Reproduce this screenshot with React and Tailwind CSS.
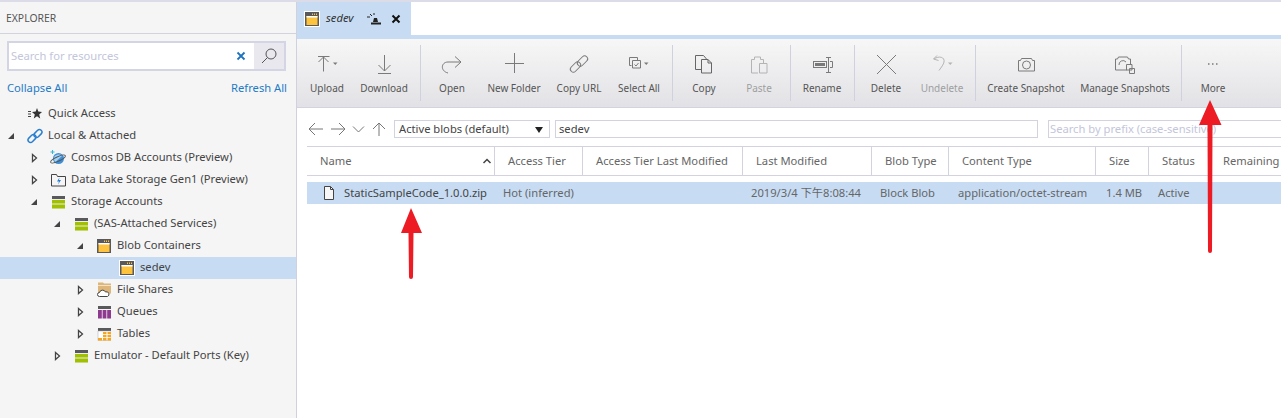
const ink = '#7a7a7a'

function Caret({ open }) {
  if (open) {
    return (
      <svg width="12" height="12" viewBox="0 0 12 12"><path d="M9 3v6H3z" fill="#444" /></svg>
    )
  }
  return (
    <svg width="12" height="12" viewBox="0 0 12 12"><path d="M4.500 2.500 8.500 6l-4 3.500z" fill="#fff" stroke="#444" strokeWidth="1.300" /></svg>
  )
}

function StorageIcon() {
  return (
    <svg width="14" height="14" viewBox="0 0 14 14">
      <rect x="1" y="1" width="13" height="12.500" fill="#eee" />
      <rect x="1" y="1" width="13" height="3" fill="#59595b" />
      <rect x="1" y="5" width="13" height="3.500" fill="#a0c000" />
      <rect x="1" y="9.500" width="13" height="4" fill="#a0c000" />
    </svg>
  )
}

function BlobIcon({ framed }) {
  return (
    <svg width="16" height="16" viewBox="0 0 16 16">
      {framed && <rect x="0" y="0" width="16" height="16" fill="#fff" />}
      <rect x="1" y="1" width="14" height="14" fill="#59595b" />
      <rect x="2.500" y="5" width="11" height="9" fill="#fdc33f" />
      <rect x="2.500" y="5" width="11" height="1.500" fill="#fff" />
      <rect x="8" y="2.500" width="1" height="1.500" fill="#fdc33f" />
      <rect x="10" y="2.500" width="1" height="1.500" fill="#fdc33f" />
      <rect x="12" y="2.500" width="1" height="1.500" fill="#fdc33f" />
    </svg>
  )
}

function QuickIcon() {
  return (
    <svg width="16" height="14" viewBox="0 0 16 14">
      <path d="M1 4.500h3M1 7h3M1 9.500h3" stroke="#444" />
      <path d="M10 1l1.300 3.600 3.700.4-2.800 2.400 1 4-3.200-2.200L6.800 11.500l1-4L5 5l3.700-.4z" fill="#333" />
    </svg>
  )
}

function LinkIcon() {
  return (
    <svg width="16" height="16" viewBox="0 0 16 16" fill="none" stroke="#2a7fd0" strokeWidth="1.500">
      <rect x="0.500" y="8" width="9" height="5" rx="2.500" transform="rotate(-45 5 10.500)" />
      <rect x="6.500" y="3" width="9" height="5" rx="2.500" transform="rotate(-45 11 5.500)" />
    </svg>
  )
}

function CosmosIcon() {
  return (
    <svg width="16" height="16" viewBox="0 0 16 16">
      <circle cx="8.500" cy="8.500" r="5.500" fill="#3f8fd8" />
      <path d="M4.500 6.500c2-2.500 6-2.500 8-1l-7 6.500c-1.500-1.500-2-3.500-1-5.500z" fill="#a4d2f2" />
      <ellipse cx="8" cy="9" rx="8" ry="2.200" fill="none" stroke="#555" transform="rotate(-25 8 9)" />
      <path d="M2.500 0v4M.500 2h4" stroke="#35b8d8" />
    </svg>
  )
}

function LakeIcon() {
  return (
    <svg width="15" height="14" viewBox="0 0 15 14" fill="none">
      <path d="M.500 13V1.500h5l1 2h8V13z" stroke="#444" />
      <path d="M8.500 4.500 6 8.500h2l-1 3 3-4.500H8z" fill="#2a7fd0" />
    </svg>
  )
}

function ShareIcon() {
  return (
    <svg width="15" height="15" viewBox="0 0 15 15">
      <path d="M1 .5h5l1 1h7v10H1z" fill="#dcb67a" />
      <path d="M1 3.500h13" stroke="#f3e2c4" />
      <path d="M2.500 14.500a2 2 0 0 1 0-4 3.200 3.200 0 0 1 6-.5 2.300 2.300 0 0 1 2 4.500z" fill="#fff" stroke="#444" />
    </svg>
  )
}

function QueueIcon() {
  return (
    <svg width="14" height="14" viewBox="0 0 14 14">
      <rect x="1" y="1" width="13" height="3" fill="#59595b" />
      <rect x="1" y="5" width="3.800" height="8.500" fill="#8e3a8f" />
      <rect x="5.600" y="5" width="3.800" height="8.500" fill="#8e3a8f" />
      <rect x="10.200" y="5" width="3.800" height="8.500" fill="#8e3a8f" />
    </svg>
  )
}

function TableIcon() {
  return (
    <svg width="14" height="14" viewBox="0 0 14 14">
      <rect x="1" y="1" width="13" height="3" fill="#59595b" />
      <rect x="1" y="4" width="13" height="9.500" fill="#fff" stroke="#aaa" strokeWidth="0.500" />
      <path d="M6 5h3.500v2.300H6zM10.500 5H14v2.300h-3.500zM6 8h3.500v2.300H6zM10.500 8H14v2.300h-3.500zM1 11h4v2.500H1zM6 11h3.500v2.500H6zM10.500 11H14v2.500h-3.500z" fill="#f5a623" />
    </svg>
  )
}

const tree = [
  { label: 'Quick Access', indent: 'pl-[5px]', icon: <QuickIcon /> },
  { label: 'Local & Attached', indent: 'pl-[5px]', open: true, caret: true, icon: <LinkIcon /> },
  { label: 'Cosmos DB Accounts (Preview)', indent: 'pl-[28px]', caret: true, icon: <CosmosIcon /> },
  { label: 'Data Lake Storage Gen1 (Preview)', indent: 'pl-[28px]', caret: true, icon: <LakeIcon /> },
  { label: 'Storage Accounts', indent: 'pl-[28px]', open: true, caret: true, icon: <StorageIcon /> },
  { label: '(SAS-Attached Services)', indent: 'pl-[51px]', open: true, caret: true, icon: <StorageIcon /> },
  { label: 'Blob Containers', indent: 'pl-[74px]', open: true, caret: true, icon: <BlobIcon /> },
  { label: 'sedev', indent: 'pl-[97px]', selected: true, icon: <BlobIcon framed /> },
  { label: 'File Shares', indent: 'pl-[74px]', caret: true, icon: <ShareIcon /> },
  { label: 'Queues', indent: 'pl-[74px]', caret: true, icon: <QueueIcon /> },
  { label: 'Tables', indent: 'pl-[74px]', caret: true, icon: <TableIcon /> },
  { label: 'Emulator - Default Ports (Key)', indent: 'pl-[51px]', caret: true, icon: <StorageIcon /> },
]

function Sidebar() {
  return (
    <aside className="w-[297px] shrink-0 border-r border-[#cfd0e0] bg-[#f5f5f5] flex flex-col">
      <div className="h-[32px] border-b border-[#d3d3e0] pl-[6px] pt-[2px] flex items-center text-[10.4px] text-[#555]">EXPLORER</div>
      <div className="mx-[7px] mt-[7px] h-[30px] w-[279px] border-2 border-[#d4d5e4] bg-white flex">
        <div className="flex-1 flex items-center pl-[2px] pt-[1px] text-[#c3c6da]">Search for resources</div>
        <div className="w-[26px] flex items-center justify-center">
          <svg width="10" height="10" viewBox="0 0 10 10"><path d="M1.500 1.500l7 7M8.500 1.500l-7 7" stroke="#1f72bd" strokeWidth="1.800" /></svg>
        </div>
        <div className="w-[30px] bg-[#e8e8ee] flex items-center justify-center">
          <svg width="18" height="18" viewBox="0 0 18 18" fill="none" stroke="#555"><circle cx="11" cy="7" r="5" /><path d="M7.500 10.500 2 16" /></svg>
        </div>
      </div>
      <div className="mx-[7px] mt-[9px] w-[280px] flex justify-between text-[#1f7bc6]">
        <span>Collapse All</span>
        <span>Refresh All</span>
      </div>
      <div className="mt-[6px]">
        {tree.map(row => (
          <div
            key={row.label}
            className={`h-[22px] flex items-center ${row.indent} ${row.selected ? 'bg-[#c7dcf3]' : ''}`}
          >
            <span className="w-[12px] h-[12px] shrink-0 flex">{row.caret && <Caret open={row.open} />}</span>
            <span className="w-[16px] ml-[10px] shrink-0 flex items-center justify-center">{row.icon}</span>
            <span className="ml-[5px] text-[#444] whitespace-nowrap">{row.label}</span>
          </div>
        ))}
      </div>
    </aside>
  )
}

function Icon({ children, w = 32 }) {
  return (
    <svg width={w} height="28" viewBox={`0 0 ${w} 28`} fill="none" stroke={ink}>{children}</svg>
  )
}

const smallCaret = <path d="M22 12.500h4.500L24.250 15z" fill={ink} stroke="none" />

const toolbar = [
  { label: 'Upload', width: 'w-[54px]', icon: <Icon><path d="M7 6.500h11.500M12.500 7v14.500M7.500 12l5-5 5 5" />{smallCaret}</Icon> },
  { label: 'Download', width: 'w-[60px]', icon: <Icon><path d="M16.500 5v16M10.500 15l6 6 6-6M10 23.500h13" /></Icon> },
  { sep: 'ml-[6px]' },
  { label: 'Open', width: 'w-[62px]', icon: <Icon><path d="M25 12H12C5 12 4 21 12 23M19 6.500l6 5.500-6 5.500" /></Icon> },
  { label: 'New Folder', width: 'w-[62px]', icon: <Icon><path d="M16.500 3v20M7 13.500h19" /></Icon> },
  { label: 'Copy URL', width: 'w-[68px]', icon: (
    <Icon>
      <rect x="6.500" y="14" width="12" height="6" rx="3" transform="rotate(-45 12.500 17)" />
      <rect x="13.500" y="8" width="12" height="6" rx="3" transform="rotate(-45 19.500 11)" />
    </Icon>
  ) },
  { label: 'Select All', width: 'w-[52px]', icon: <Icon w={34}><path d="M9.500 15.500h-2v-8h8v2.500M10.500 10.500h8v7.500h-8zM12.500 14.500l1.500 1.500 2.500-3" />{smallCaret}</Icon> },
  { sep: 'ml-[7px]' },
  { label: 'Copy', width: 'w-[62px]', icon: <Icon><path d="M13 19.500H7.500v-14h8l3 3.500v.5M13.500 9.500h6.500l3.500 3.500v10h-10zM20 9.500V13h3.500" stroke="#666" /></Icon> },
  { label: 'Paste', width: 'w-[48px]', disabled: true, icon: <Icon><path d="M15 23H8.500V9.500h3V7h6v2.500h3V13M16.500 13.500h7.500v9.500h-7.500z" /></Icon> },
  { sep: 'ml-[7px]' },
  { label: 'Rename', width: 'w-[62px]', icon: <Icon><rect x="7.500" y="11.500" width="13" height="6" /><rect x="9" y="13" width="10" height="3" fill={ink} stroke="none" /><path d="M20 7.500h5M20 22.500h5M22.500 8v14M24 11.500h2.500v6H24" /></Icon> },
  { sep: 'ml-[1px]' },
  { label: 'Delete', width: 'w-[62px]', icon: <Icon><path d="M7 5l19 19M26 5 7 24" /></Icon> },
  { label: 'Undelete', width: 'w-[50px]', disabled: true, icon: <Icon><path d="M11 5.500 7.500 9l5 1.500M8 9c5-3.500 11-2 10 3-.5 2.500-2.500 5-5 8.500" />{smallCaret}</Icon> },
  { sep: 'ml-[8px]' },
  { label: 'Create Snapshot', width: 'w-[100px]', icon: <Icon><path d="M8.500 10.500h2l1-2h10l1 2h2v10.500h-16z" /><circle cx="16.500" cy="15" r="4" /></Icon> },
  { label: 'Manage Snapshots', width: 'w-[98px]', icon: <Icon><path d="M18 20H6.500V9h2l1-2h9l1 2h2v7" /><path d="M10 15a4 4 0 0 1 7-3" /><path d="M17.500 14.500h5.500v5.500h-5.500zM20.500 18.500h5v5h-5z" fill="#eee" /></Icon> },
  { sep: 'ml-[7px]' },
  { label: 'More', width: 'w-[62px]', icon: <Icon><path d="M11 14h1.500M15 14h1.500M19 14h1.500" strokeWidth="1.500" /></Icon> },
]

function Toolbar() {
  return (
    <div className="h-[69px] pl-[3px] flex items-center border-b border-[#d3d3e0] bg-gradient-to-b from-[#f7f7f7] to-[#e2e2e6]">
      {toolbar.map((item, i) => item.sep ? (
        <div key={i} className={`${item.sep} w-px h-[56px] bg-[#d0d1e0]`} />
      ) : (
        <div key={item.label} className={`${item.width} h-full flex flex-col items-center shrink-0 whitespace-nowrap ${item.disabled ? 'opacity-50' : ''}`}>
          <div className="mt-[11px] h-[28px] flex items-center justify-center">{item.icon}</div>
          <span className="mt-[2px] text-[#555] text-[10px] leading-[16px]">{item.label}</span>
        </div>
      ))}
    </div>
  )
}

const columns = [
  { label: 'Name', width: 'w-[188px]', sort: true },
  { label: 'Access Tier', width: 'w-[88px]' },
  { label: 'Access Tier Last Modified', width: 'w-[160px]' },
  { label: 'Last Modified', width: 'w-[129px]' },
  { label: 'Blob Type', width: 'w-[77px]' },
  { label: 'Content Type', width: 'w-[147px]' },
  { label: 'Size', width: 'w-[53px]' },
  { label: 'Status', width: 'w-[61px]' },
  { label: 'Remaining', width: 'w-[71px]' },
]

const cells = [
  { text: 'StaticSampleCode_1.0.0.zip', width: 'w-[188px]', file: true },
  { text: 'Hot (inferred)', width: 'w-[88px]', pad: 'pl-[8px]' },
  { text: '', width: 'w-[160px]' },
  { text: '2019/3/4 下午8:08:44', width: 'w-[129px]', pad: 'pl-[8px]' },
  { text: 'Block Blob', width: 'w-[77px]', pad: 'pl-[8px]' },
  { text: 'application/octet-stream', width: 'w-[147px]', pad: 'pl-[9px]' },
  { text: '1.4 MB', width: 'w-[53px]', pad: 'pl-[10px]' },
  { text: 'Active', width: 'w-[61px]', pad: 'pl-[9px]' },
]

function BlobTable() {
  return (
    <div className="ml-[10px]">
      <div className="h-[30px] flex border-y border-[#d3d3e0] text-[#666] whitespace-nowrap">
        {columns.map((col, i) => (
          <div key={col.label} className={`${col.width} shrink-0 flex items-center pl-[13px] ${i < 8 ? 'border-r border-[#d3d3e0]' : ''}`}>
            <span className="flex-1">{col.label}</span>
            {col.sort && (
              <svg className="mr-[2px]" width="10" height="8" viewBox="0 0 10 8" fill="none"><path d="M1.500 6 5 2.500 8.500 6" stroke="#444" strokeWidth="1.500" /></svg>
            )}
          </div>
        ))}
      </div>
      <div className="mt-[6px] h-[22px] flex items-center bg-[#c7dcf3] whitespace-nowrap text-[#666]">
        {cells.map((cell, i) => (
          <div key={i} className={`${cell.width} shrink-0 flex items-center ${cell.pad || ''}`}>
            {cell.file ? (
              <>
                <svg className="ml-[16px] mr-[9px]" width="12" height="14" viewBox="0 0 12 14"><path d="M1.500.5h6l3 3v10h-9z" fill="#f7f7f7" stroke="#444" /><path d="M7.500.5v3h3" fill="none" stroke="#444" /></svg>
                <span className="text-[#444]">{cell.text}</span>
              </>
            ) : cell.text}
          </div>
        ))}
      </div>
    </div>
  )
}

function NavRow() {
  return (
    <div className="h-[34px] ml-[10px] flex items-center">
      <svg width="84" height="16" viewBox="0 0 84 16" fill="none" stroke="#777" className="shrink-0">
        <path d="M16 8H2M8 2 2 8l6 6M24 8h14M32 2l6 6-6 6M46 5.500l5.500 5.500 5.500-5.500M72 15V2M66 8l6-6 6 6" />
      </svg>
      <div className="ml-[3px] w-[156px] h-[18px] border border-[#d3d3e0] flex items-center pl-[4px] pt-[1px] text-[#444] shrink-0">
        <span className="flex-1">Active blobs (default)</span>
        <svg className="mr-[6px]" width="8" height="6" viewBox="0 0 8 6"><path d="M0 0h8L4 6z" fill="#222" /></svg>
      </div>
      <div className="ml-[5px] w-[483px] h-[18px] border border-[#d3d3e0] flex items-center pl-[3px] text-[#444] shrink-0">sedev</div>
      <div className="ml-[10px] flex-1 h-[18px] border border-[#d3d3e0] border-r-0 flex items-center pl-[1px] text-[#c3c6da] whitespace-nowrap overflow-hidden">Search by prefix (case-sensitive)</div>
    </div>
  )
}

export default function App() {
  return (
    <div className="relative w-[1281px] h-[418px] overflow-hidden bg-white border-t-2 border-[#dcdce8] text-[11.2px] font-['Noto_Sans','Noto_Sans_CJK_SC',sans-serif] flex">
      <Sidebar />
      <main className="flex-1 min-w-0 flex flex-col">
        <div className="h-[33px] flex shrink-0">
          <div className="w-[114px] bg-[#c7dcf3] flex items-center pl-[7px]">
            <BlobIcon framed />
            <span className="ml-[6px] italic text-[#333]">sedev</span>
            <svg className="ml-[13px]" width="16" height="12" viewBox="0 0 16 12"><path d="M5 9.500h10v2H5zM7 9l1-4h3l1 4z" fill="#222" /><path d="M1 4h3M4 1l2 2M8 0v2" stroke="#222" /></svg>
            <svg className="ml-[9px]" width="10" height="10" viewBox="0 0 10 10"><path d="M1.500 1.500l7 7M8.500 1.500l-7 7" stroke="#111" strokeWidth="2" /></svg>
          </div>
        </div>
        <div className="h-[4px] bg-[#c7dcf3] shrink-0" />
        <Toolbar />
        <div className="h-[4px] shrink-0" />
        <NavRow />
        <BlobTable />
      </main>
      {/* red annotation arrows drawn over the window */}
      <svg className="absolute left-0 top-[-2px] pointer-events-none" width="1281" height="418" viewBox="0 0 1281 418">
        <path d="M411 208 422 233H413.500L413 277a2 2 0 0 1-4 0L408.500 233H401z" fill="#ed1c24" />
        <path d="M1210 100 1221.500 125H1212.500L1212 251a2 2 0 0 1-4 0L1207.500 125H1199z" fill="#ed1c24" />
      </svg>
    </div>
  )
}
